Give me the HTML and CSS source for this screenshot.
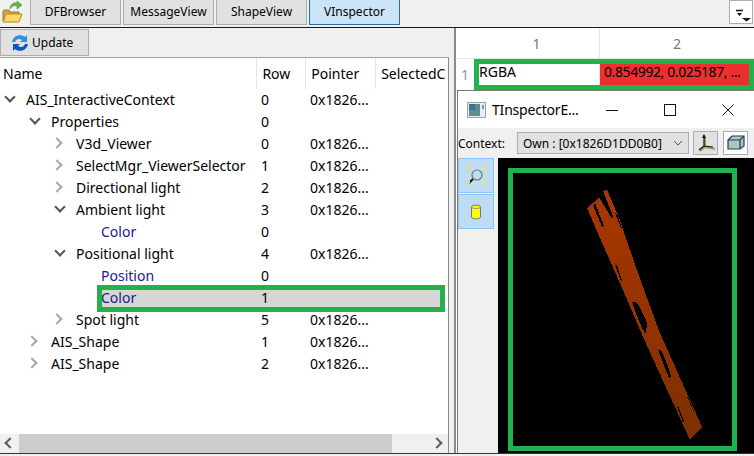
FILE: index.html
```html
<!DOCTYPE html>
<html lang="en">
<head>
    <meta charset="UTF-8">
    <title>VInspector</title>
    <link rel="stylesheet" href="styles.css">
</head>
<body>

<div class="tabbar">
    <svg class="open-icon" width="24" height="24" viewBox="0 0 24 24">
        <path d="M3 21 V11 L4 10 H9 L10 12 H19 V15" fill="#d9a53a" stroke="#a07a24"/>
        <path d="M3 22 L6 14 H22 L19 22 Z" fill="#fbd866" stroke="#b08a2c"/>
        <path d="M10 9 C10 4 14 2 17 3 L17 1 L22 5 L17 9 L17 6 C14 5 12 6 10 9 Z" fill="#5fb548" stroke="#3f8f35" stroke-width="0.5"/>
    </svg>
    <div class="tab">DFBrowser</div>
    <div class="tab">MessageView</div>
    <div class="tab">ShapeView</div>
    <div class="tab active">VInspector</div>
    <div class="menu-btn">
        <svg width="22" height="22" viewBox="0 0 22 22">
            <path d="M6 9.5 H13" stroke="#111" fill="none" stroke-width="1.5"/>
            <path d="M7 12 H12 L9.5 15 Z M12 17 H21 L16.5 20.5 Z" fill="#111"/>
        </svg>
    </div>
</div>

<div class="main">
    <div class="left">
        <div class="toolbar">
            <div class="update-btn">
                <svg width="18" height="18" viewBox="0 0 18 18">
                    <path d="M1 8 C2 2 9 -1 14 3 L16 1 V8 H9 L11 6 C8 4 5 5 4 8 Z" fill="#2d8fe0"/>
                    <path d="M17 10 C16 16 9 19 4 15 L2 17 V10 H9 L7 12 C10 14 13 13 14 10 Z" fill="#0f55b5"/>
                </svg>
                <span>Update</span>
            </div>
        </div>

        <div class="tree">
            <div class="tree-head">
                <div class="c-name">Name</div>
                <div class="c-row">Row</div>
                <div class="c-ptr">Pointer</div>
                <div class="c-sel">SelectedC</div>
            </div>

            <div class="row lvl0"><i class="arr open"></i><div class="c-name">AIS_InteractiveContext</div><div class="c-row">0</div><div class="c-ptr">0x1826...</div></div>
            <div class="row lvl1"><i class="arr open"></i><div class="c-name">Properties</div><div class="c-row">0</div></div>
            <div class="row lvl2"><i class="arr shut"></i><div class="c-name">V3d_Viewer</div><div class="c-row">0</div><div class="c-ptr">0x1826...</div></div>
            <div class="row lvl2"><i class="arr shut"></i><div class="c-name">SelectMgr_ViewerSelector</div><div class="c-row">1</div><div class="c-ptr">0x1826...</div></div>
            <div class="row lvl2"><i class="arr shut"></i><div class="c-name">Directional light</div><div class="c-row">2</div><div class="c-ptr">0x1826...</div></div>
            <div class="row lvl2"><i class="arr open"></i><div class="c-name">Ambient light</div><div class="c-row">3</div><div class="c-ptr">0x1826...</div></div>
            <div class="row lvl3"><div class="c-name blue">Color</div><div class="c-row">0</div></div>
            <div class="row lvl2"><i class="arr open"></i><div class="c-name">Positional light</div><div class="c-row">4</div><div class="c-ptr">0x1826...</div></div>
            <div class="row lvl3"><div class="c-name blue">Position</div><div class="c-row">0</div></div>
            <div class="row lvl3 picked"><div class="c-name blue">Color</div><div class="c-row">1</div></div>
            <div class="row lvl2"><i class="arr shut"></i><div class="c-name">Spot light</div><div class="c-row">5</div><div class="c-ptr">0x1826...</div></div>
            <div class="row lvl1"><i class="arr shut"></i><div class="c-name">AIS_Shape</div><div class="c-row">1</div><div class="c-ptr">0x1826...</div></div>
            <div class="row lvl1"><i class="arr shut"></i><div class="c-name">AIS_Shape</div><div class="c-row">2</div><div class="c-ptr">0x1826...</div></div>
        </div>

        <div class="hscroll">
            <span class="sb-arrow sb-left"></span>
            <div class="sb-track"><div class="sb-thumb"></div></div>
            <span class="sb-arrow sb-right"></span>
        </div>
    </div>

    <div class="side-pane">
        <div class="grid-head">
            <div class="g-corner"></div>
            <div class="g-col1">1</div>
            <div class="g-col2">2</div>
        </div>
        <div class="grid-row">
            <div class="g-corner">1</div>
            <div class="g-cells">
                <div class="g-col1 cell">RGBA</div>
                <div class="g-col2 cell red">0.854992, 0.025187, ...</div>
            </div>
        </div>

        <div class="window">
            <div class="titlebar">
                <svg class="win-icon" width="19" height="16" viewBox="0 0 19 16">
                    <rect x="0.5" y="0.5" width="18" height="15" fill="#e8ecee" stroke="#9aa5ab"/>
                    <rect x="2" y="2" width="11" height="12" fill="#5b8f8d"/>
                    <rect x="2" y="2" width="6" height="6" fill="#3e6f95"/>
                    <rect x="15" y="3" width="2" height="4" fill="#7d9aa6"/>
                </svg>
                <span class="win-title">TInspectorE...</span>
                <svg class="win-btn" width="14" height="14" viewBox="0 0 14 14"><path d="M1 7.5 H13" stroke="#111"/></svg>
                <svg class="win-btn" width="14" height="14" viewBox="0 0 14 14"><rect x="1.5" y="1.5" width="11" height="11" fill="none" stroke="#111"/></svg>
                <svg class="win-btn" width="14" height="14" viewBox="0 0 14 14"><path d="M1.5 1.5 L12.5 12.5 M12.5 1.5 L1.5 12.5" stroke="#111"/></svg>
            </div>
            <div class="ctx-row">
                <span class="ctx-label">Context:</span>
                <div class="combo">
                    <span>Own : [0x1826D1DD0B0]</span>
                    <svg width="10" height="6" viewBox="0 0 10 6"><path d="M1 1 L5 5 L9 1" fill="none" stroke="#555"/></svg>
                </div>
                <div class="ctx-btn">
                    <svg width="20" height="20" viewBox="0 0 20 20">
                        <path d="M9 4 V14 L4 18 M9 14 L19 16" fill="none" stroke="#a39a5c" stroke-width="2"/>
                        <path d="M8 2 V13 L3 17 M8 13 L17 14" fill="none" stroke="#111" stroke-width="1.2"/>
                        <path d="M6 5 L8 1 L10 5 Z" fill="#111"/>
                    </svg>
                </div>
                <div class="ctx-btn cube">
                    <svg width="20" height="20" viewBox="0 0 20 20">
                        <path d="M2 7 L6 3 H18 V13 L14 16 H2 Z" fill="#b4c2c4" stroke="#17464f" stroke-width="1.2"/>
                        <path d="M2 7 H14 V16 M14 7 L18 3" fill="none" stroke="#17464f" stroke-width="1.2"/>
                    </svg>
                </div>
            </div>
            <div class="view-area">
                <div class="side">
                    <div class="side-btn">
                        <svg width="20" height="20" viewBox="0 0 20 20">
                            <circle cx="11" cy="9" r="5" fill="none" stroke="#777" stroke-width="1.2"/>
                            <path d="M7 13 L3 17" stroke="#111" stroke-width="2"/>
                            <path d="M3 4 V2 H5 M17 2 H19 V4 M17 17 H19 V15 M3 15 V17" stroke="#ffee00" stroke-width="2" fill="none"/>
                        </svg>
                    </div>
                    <div class="side-btn">
                        <svg width="12" height="16" viewBox="0 0 12 16">
                            <path d="M1.5 3 C1.5 0.5 10.5 0.5 10.5 3 V13 C10.5 15.5 1.5 15.5 1.5 13 Z" fill="#ffff00" stroke="#777"/>
                            <path d="M1.5 3 C1.5 5 10.5 5 10.5 3" fill="none" stroke="#999"/>
                        </svg>
                    </div>
                </div>
                <div class="viewer">
                    <svg class="shape" width="256" height="295" viewBox="498 158 256 295" shape-rendering="crispEdges">
                        <defs>
                            <linearGradient id="metal" x1="0" y1="0" x2="0" y2="1">
                                <stop offset="0" stop-color="#aa3600"/>
                                <stop offset="1" stop-color="#7c3000"/>
                            </linearGradient>
                        </defs>
                        <path fill="url(#metal)" fill-rule="evenodd" d="M603 191 L607 190 L620 220 L623 230 L643 287 L660 333 L702 427 L690 440 L643 337 L623 290 L603 245 L587 208 L593 203 L599 197 L612 219 L613 216 Z
                            M593 205 L602 227 L604 226 L595 203 Z
                            M615 213 L621 228 L622 228 L617 214 Z
                            M615 265 L621 281 L622 280 L617 265 Z
                            M632 302 C637 300 640 306 647 323 L646 334 C641 328 636 314 632 302 Z
                            M658 350 L661 350 C665 358 669 368 671 377 L669 378 Z
                            M677 407 L683 422 L684 421 L678 406 Z
                            M687 397 L694 412 L694 411 L688 397 Z"/>
                    </svg>
                </div>
            </div>
        </div>
    </div>
</div>

</body>
</html>
```

FILE: styles.css
```css
*, *::after {
    box-sizing: border-box;
}
body {
    margin: 0;
    width: 754px;
    height: 456px;
    overflow: hidden;
    background-color: #f0f0f0;
    font-family: "Noto Sans", "Open Sans", sans-serif;
    font-size: 14px;
    color: #000;
}
.tabbar {
    display: flex;
    height: 28px;
    gap: 2px;
    border-bottom: 1px solid #1a1a1a;
}
.open-icon {
    margin: 0 4px 0 0;
}
.tab {
    width: 91px;
    height: 25px;
    background-color: #e1e1e1;
    border: 1px solid #adadad;
    border-top: none;
    font-size: 12px;
    line-height: 24px;
    text-align: center;
}
.tab.active {
    background-color: #cce4f7;
    border-color: #1f6fb0;
}
.menu-btn {
    margin-left: auto;
    margin-right: 1px;
    width: 24px;
    height: 24px;
    background-color: #fff;
    border: 1px solid #adadad;
}
.main {
    display: flex;
    height: 426px;
    border-bottom: 1px solid #333;
}
.left {
    width: 449px;
    display: flex;
    flex-direction: column;
    background-color: #fff;
    border-right: 1px solid #8a8a8a;
}
.toolbar {
    flex: none;
    height: 30px;
    padding-top: 1px;
    background-color: #f0f0f0;
    border-bottom: 1px solid #a0a0a0;
    margin-right: -1px;
}
.update-btn {
    display: flex;
    align-items: center;
    gap: 3px;
    width: 89px;
    height: 27px;
    padding-left: 10px;
    background-color: #e1e1e1;
    border: 1px solid #adadad;
    font-size: 12px;
}
.tree {
    flex: 1;
    overflow: hidden;
}
.tree-head {
    display: flex;
    height: 31px;
    padding-left: 3px;
    line-height: 31px;
}
.tree-head .c-name {
    width: 255px;
    border-right: 1px solid #e5e5e5;
}
.tree-head .c-row {
    width: 49px;
    padding-left: 5px;
    border-right: 1px solid #e5e5e5;
}
.tree-head .c-ptr {
    width: 70px;
    padding-left: 5px;
    border-right: 1px solid #e5e5e5;
}
.tree-head .c-sel {
    width: 72px;
    padding-left: 5px;
    overflow: hidden;
    white-space: nowrap;
}
.row {
    position: relative;
    display: flex;
    height: 22px;
    line-height: 22px;
    white-space: nowrap;
}
.row .c-name {
    flex: none;
}
.lvl0 .c-name { width: 235px; margin-left: 26px; }
.lvl1 .c-name { width: 210px; margin-left: 51px; }
.lvl2 .c-name { width: 185px; margin-left: 76px; }
.lvl3 .c-name { width: 160px; margin-left: 101px; }
.blue {
    color: #1a1a8c;
}
.row .c-row {
    width: 49px;
}
.arr {
    position: absolute;
    width: 8px;
    height: 8px;
    border-right: 2px solid #555;
    border-bottom: 2px solid #555;
}
.arr.open {
    top: 4px;
    transform: rotate(45deg);
}
.arr.shut {
    top: 6px;
    border-color: #a9a9a9;
    transform: rotate(-45deg);
}
.lvl0 .arr.open { left: 6px; }
.lvl1 .arr.open { left: 31px; }
.lvl2 .arr.open { left: 56px; }
.lvl1 .arr.shut { left: 28px; }
.lvl2 .arr.shut { left: 53px; }
.picked {
    background: linear-gradient(#d6d6d6, #d6d6d6) 101px 0 / 340px 22px no-repeat;
}
.picked::after {
    content: "";
    position: absolute;
    left: 97px;
    top: -2px;
    width: 348px;
    height: 27px;
    border: 5px solid #22b14c;
}
.hscroll {
    flex: none;
    display: flex;
    align-items: center;
    height: 19px;
    background-color: #f0f0f0;
}
.sb-track {
    flex: 1;
    height: 100%;
}
.sb-thumb {
    width: 373px;
    height: 100%;
    background-color: #cdcdcd;
}
.sb-arrow {
    flex: none;
    width: 19px;
    height: 19px;
    position: relative;
}
.sb-arrow::after {
    content: "";
    position: absolute;
    top: 5px;
    width: 8px;
    height: 8px;
    border-left: 2px solid #606060;
    border-bottom: 2px solid #606060;
}
.sb-left::after {
    left: 6px;
    transform: rotate(45deg);
}
.sb-right::after {
    left: 4px;
    transform: rotate(-135deg);
}
.side-pane {
    position: relative;
    flex: 1;
    min-width: 0;
    margin-left: 5px;
    border-left: 2px solid #8a8a8a;
    background-color: #fff;
    background-clip: padding-box;
}
.grid-head {
    display: flex;
    height: 31px;
    line-height: 32px;
    text-align: center;
    color: #777;
    border-bottom: 1px solid #e5e5e5;
}
.grid-row {
    display: flex;
    height: 31px;
    line-height: 32px;
    color: #7d9bb5;
}
.g-corner {
    flex: none;
    width: 18px;
    text-align: center;
}
.g-col1 {
    width: 126px;
    border-right: 1px solid #e5e5e5;
}
.g-col2 {
    width: 154px;
}
.g-cells {
    display: flex;
    flex: 1;
    min-width: 0;
    border: 5px solid #22b14c;
    color: #000;
}
.cell {
    line-height: 15px;
    white-space: nowrap;
}
.g-cells .g-col1 {
    flex: none;
    width: 121px;
}
.g-cells .g-col2 {
    flex: 1;
    min-width: 0;
    padding-left: 4px;
}
.red {
    background-color: #ee2f2f;
    letter-spacing: -0.4px;
}
.window {
    position: absolute;
    left: 1px;
    top: 62px;
    width: 297px;
    height: 363px;
    background-color: #f0f0f0;
    border-left: 1px solid #777;
    border-top: 1px solid #777;
}
.titlebar {
    display: flex;
    align-items: center;
    height: 37px;
    background-color: #fff;
    padding-left: 9px;
}
.win-icon {
    flex: none;
}
.win-title {
    flex: none;
    margin-left: 6px;
    width: 113px;
    letter-spacing: -0.2px;
    white-space: nowrap;
}
.win-btn {
    flex: none;
    margin-right: 44px;
}
.win-btn:last-child {
    margin-right: 0;
}
.ctx-row {
    display: flex;
    align-items: center;
    height: 30px;
    font-size: 12px;
}
.ctx-label {
    width: 59px;
}
.combo {
    display: flex;
    align-items: center;
    justify-content: space-between;
    width: 172px;
    height: 22px;
    padding: 0 5px;
    background-color: #e1e1e1;
    border: 1px solid #adadad;
}
.ctx-btn {
    display: flex;
    align-items: center;
    justify-content: center;
    width: 25px;
    height: 24px;
    margin-left: 4px;
    background-color: #e1e1e1;
    border: 1px solid #adadad;
}
.ctx-btn.cube {
    margin-left: 5px;
    background-color: #fff;
}
.view-area {
    display: flex;
    height: 295px;
}
.side {
    flex: none;
    width: 40px;
}
.side-btn {
    display: flex;
    align-items: center;
    justify-content: center;
    width: 36px;
    height: 35px;
    margin-bottom: 1px;
    background-color: #bfdcf5;
    border: 1px solid #8cc4f5;
}
.viewer {
    position: relative;
    flex: 1;
    background-color: #000;
}
.viewer::after {
    content: "";
    position: absolute;
    left: 10px;
    top: 10px;
    width: 229px;
    height: 283px;
    border: 5px solid #22b14c;
}
.shape {
    display: block;
}
```
